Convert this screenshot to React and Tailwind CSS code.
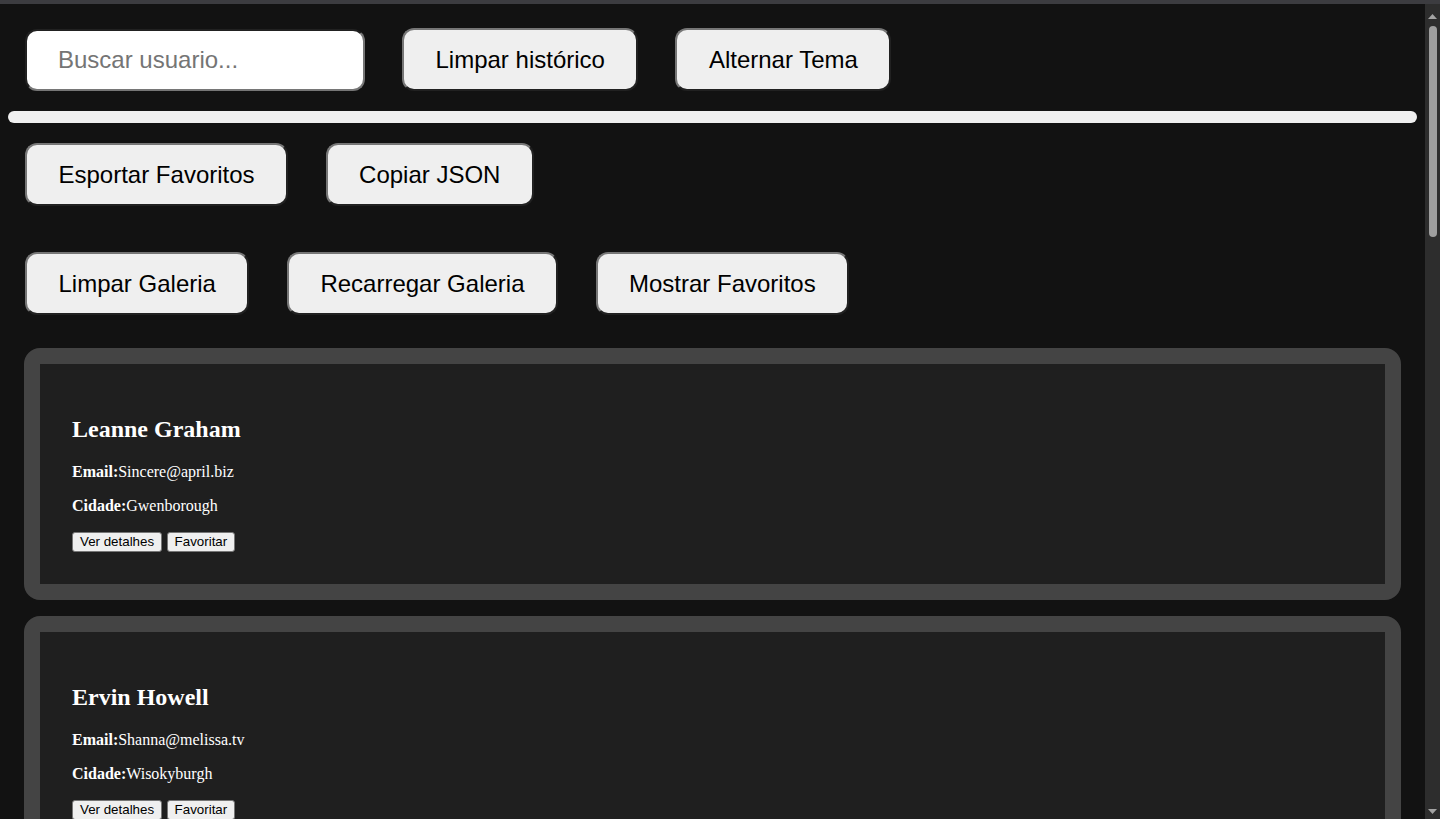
const users = [
  { name: 'Leanne Graham', email: 'Sincere@april.biz', city: 'Gwenborough' },
  { name: 'Ervin Howell', email: 'Shanna@melissa.tv', city: 'Wisokyburgh' },
];

function BigButton({ children }) {
  return (
    <button className="h-[63px] shrink-0 flex items-center bg-[#efefef] text-black text-[24px] leading-[27px] px-[31.5px] border-2 border-[#767676] [border-style:outset] rounded-[12px] whitespace-nowrap">
      {children}
    </button>
  );
}

function SmallButton({ children }) {
  return (
    <button className="bg-[#efefef] text-black text-[13.33px] leading-[15px] h-[20px] px-[7px] border border-[#767676] rounded-[3px] font-['Liberation_Sans',Arial,sans-serif]">
      {children}
    </button>
  );
}

function UserCard({ user }) {
  return (
    <div className="shrink-0 border-[16px] border-[#444444] rounded-[16px] bg-[#1f1f1f] p-[32px] text-white font-['Liberation_Serif','Times_New_Roman',serif]">
      <h2 className="mt-[20px] text-[24px] leading-[27px] font-bold">{user.name}</h2>
      <p className="mt-[20px] text-[16px] leading-[18px]"><strong>Email:</strong>{user.email}</p>
      <p className="mt-[16px] text-[16px] leading-[18px]"><strong>Cidade:</strong>{user.city}</p>
      <div className="mt-[16px] h-[21px] flex items-center gap-[4.5px]">
        <SmallButton>Ver detalhes</SmallButton>
        <SmallButton>Favoritar</SmallButton>
      </div>
    </div>
  );
}

function Scrollbar() {
  return (
    <div className="w-[15px] shrink-0 bg-[#2d2d2d] flex flex-col items-center">
      <svg width="9" height="5" viewBox="0 0 9 5" className="mt-[10px]">
        <polygon points="4.5,0 9,5 0,5" fill="#a3a3a3" />
      </svg>
      <div className="mt-[7px] w-[8px] h-[211px] rounded-full bg-[#9e9e9e]"></div>
      <div className="flex-1"></div>
      <svg width="9" height="5" viewBox="0 0 9 5" className="mb-[5px]">
        <polygon points="0,0 9,0 4.5,5" fill="#a3a3a3" />
      </svg>
    </div>
  );
}

export default function App() {
  return (
    <div className="h-[819px] overflow-hidden flex flex-col bg-[#121212] font-['Liberation_Sans',Arial,sans-serif]">
      <div className="h-[4px] shrink-0 bg-[#3c3c40]"></div>
      <div className="flex-1 flex min-h-0">
        <div className="flex-1 min-w-0 overflow-hidden px-[8px]">
          <div className="flex items-center gap-[37px] px-[17px] pt-[24px]">
            <input
              type="text"
              placeholder="Buscar usuario..."
              className="w-[340px] h-[62px] bg-white text-black text-[24px] px-[31px] border-2 border-[#767676] [border-style:inset] rounded-[12px] placeholder:text-[#757575] outline-none"
            />
            <BigButton>Limpar histórico</BigButton>
            <BigButton>Alternar Tema</BigButton>
          </div>

          <div className="mt-[20px] h-[12px] rounded-full bg-[#efefef]"></div>

          <div className="mt-[20px] flex gap-[37.5px] px-[17px]">
            <BigButton>Esportar Favoritos</BigButton>
            <BigButton>Copiar JSON</BigButton>
          </div>

          <div className="mt-[46px] flex gap-[37.5px] px-[17px]">
            <BigButton>Limpar Galeria</BigButton>
            <BigButton>Recarregar Galeria</BigButton>
            <BigButton>Mostrar Favoritos</BigButton>
          </div>

          <div className="mt-[33px] mx-[16px] flex flex-col gap-[16px]">
            {users.map(u => (
              <UserCard key={u.email} user={u} />
            ))}
          </div>
        </div>
        <Scrollbar />
      </div>
    </div>
  );
}
